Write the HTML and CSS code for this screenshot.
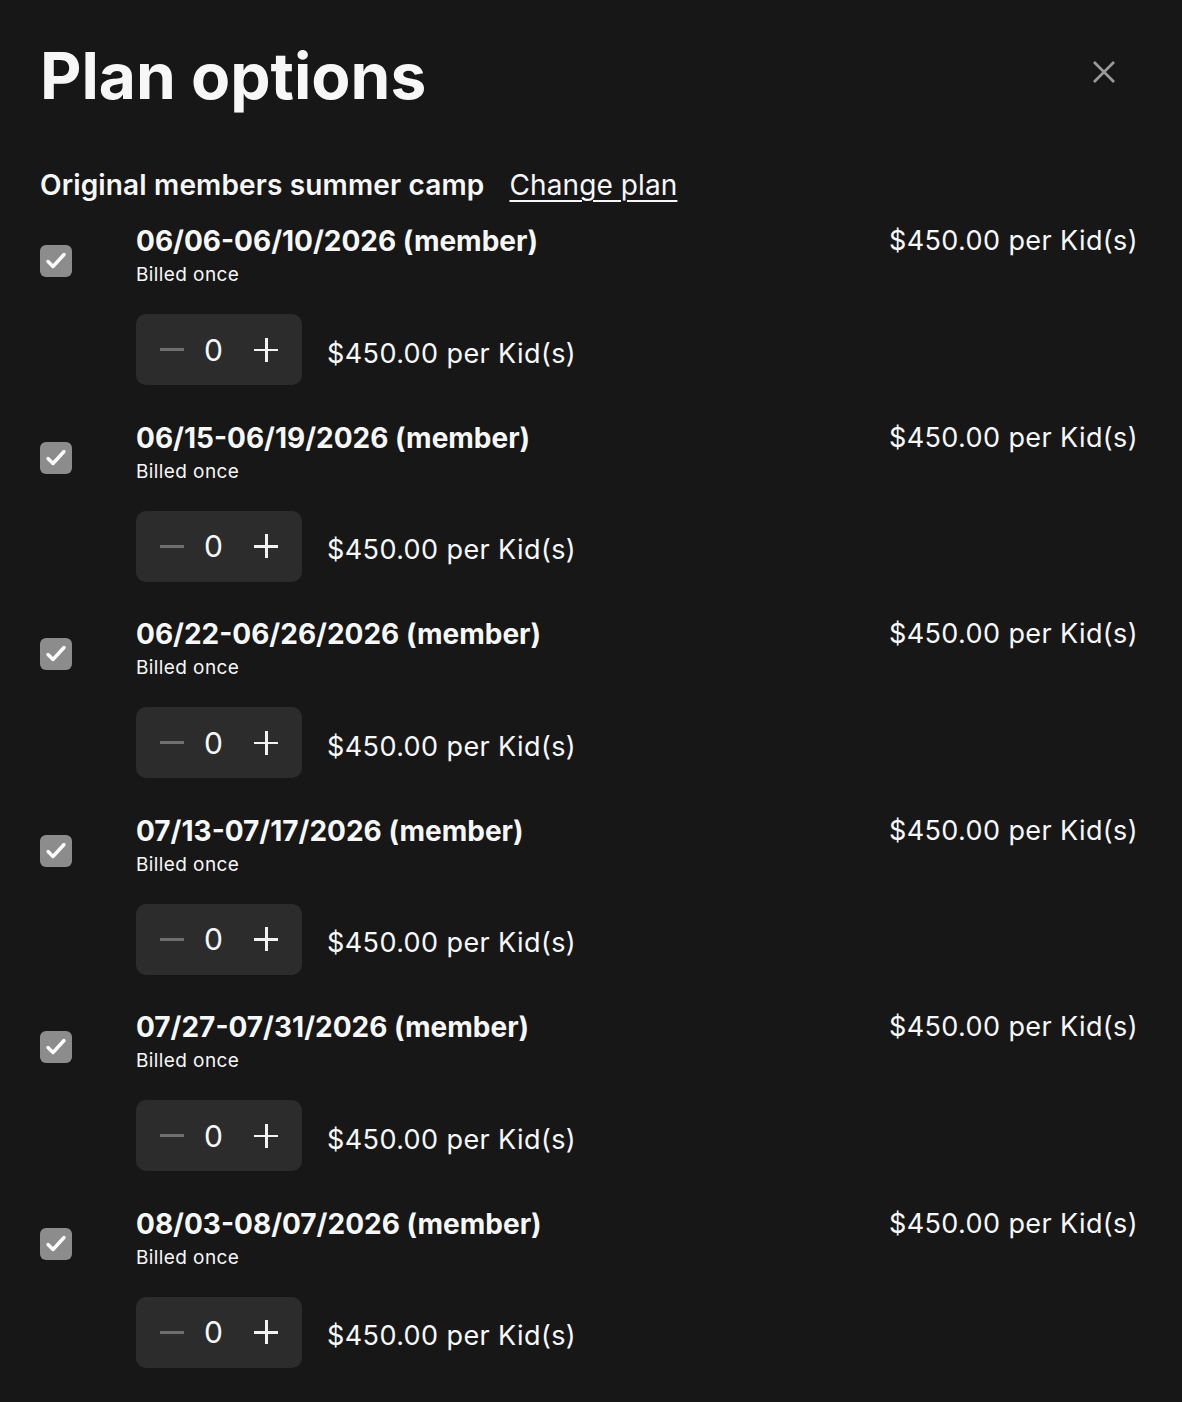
FILE: index.html
```html
<!DOCTYPE html>
<html lang="en">
<head>
<meta charset="utf-8">
<title>Plan options</title>
<link rel="stylesheet" href="styles.css">
</head>
<body>
<div class="modal">
  <header class="modal-header">
    <h1 class="title">Plan options</h1>
    <button class="close" aria-label="Close">
      <svg width="24" height="24" viewBox="0 0 24 24"><path d="M2 2 L22 22 M22 2 L2 22" stroke="#9b9b9b" stroke-width="2.6" fill="none"/></svg>
    </button>
  </header>
  <div class="plan-head">
    <span class="plan-name">Original members summer camp</span>
    <a class="change" href="#">Change plan</a>
  </div>
  <ul class="options">
    <li class="option">
      <span class="check"><svg width="32" height="32" viewBox="0 0 32 32"><path d="M8 16.5 L13 21.5 L24 9.5" stroke="#fff" stroke-width="3.4" fill="none" stroke-linecap="round" stroke-linejoin="round"/></svg></span>
      <div class="info"><div class="name">06/06-06/10/2026 (member)</div><div class="billed">Billed once</div></div>
      <div class="price">$450.00 per Kid(s)</div>
      <div class="qty-row">
        <div class="stepper"><span class="minus"></span><span class="count">0</span><span class="plus"></span></div>
        <span class="qty-price">$450.00 per Kid(s)</span>
      </div>
    </li>
    <li class="option">
      <span class="check"><svg width="32" height="32" viewBox="0 0 32 32"><path d="M8 16.5 L13 21.5 L24 9.5" stroke="#fff" stroke-width="3.4" fill="none" stroke-linecap="round" stroke-linejoin="round"/></svg></span>
      <div class="info"><div class="name">06/15-06/19/2026 (member)</div><div class="billed">Billed once</div></div>
      <div class="price">$450.00 per Kid(s)</div>
      <div class="qty-row">
        <div class="stepper"><span class="minus"></span><span class="count">0</span><span class="plus"></span></div>
        <span class="qty-price">$450.00 per Kid(s)</span>
      </div>
    </li>
    <li class="option">
      <span class="check"><svg width="32" height="32" viewBox="0 0 32 32"><path d="M8 16.5 L13 21.5 L24 9.5" stroke="#fff" stroke-width="3.4" fill="none" stroke-linecap="round" stroke-linejoin="round"/></svg></span>
      <div class="info"><div class="name">06/22-06/26/2026 (member)</div><div class="billed">Billed once</div></div>
      <div class="price">$450.00 per Kid(s)</div>
      <div class="qty-row">
        <div class="stepper"><span class="minus"></span><span class="count">0</span><span class="plus"></span></div>
        <span class="qty-price">$450.00 per Kid(s)</span>
      </div>
    </li>
    <li class="option">
      <span class="check"><svg width="32" height="32" viewBox="0 0 32 32"><path d="M8 16.5 L13 21.5 L24 9.5" stroke="#fff" stroke-width="3.4" fill="none" stroke-linecap="round" stroke-linejoin="round"/></svg></span>
      <div class="info"><div class="name">07/13-07/17/2026 (member)</div><div class="billed">Billed once</div></div>
      <div class="price">$450.00 per Kid(s)</div>
      <div class="qty-row">
        <div class="stepper"><span class="minus"></span><span class="count">0</span><span class="plus"></span></div>
        <span class="qty-price">$450.00 per Kid(s)</span>
      </div>
    </li>
    <li class="option">
      <span class="check"><svg width="32" height="32" viewBox="0 0 32 32"><path d="M8 16.5 L13 21.5 L24 9.5" stroke="#fff" stroke-width="3.4" fill="none" stroke-linecap="round" stroke-linejoin="round"/></svg></span>
      <div class="info"><div class="name">07/27-07/31/2026 (member)</div><div class="billed">Billed once</div></div>
      <div class="price">$450.00 per Kid(s)</div>
      <div class="qty-row">
        <div class="stepper"><span class="minus"></span><span class="count">0</span><span class="plus"></span></div>
        <span class="qty-price">$450.00 per Kid(s)</span>
      </div>
    </li>
    <li class="option">
      <span class="check"><svg width="32" height="32" viewBox="0 0 32 32"><path d="M8 16.5 L13 21.5 L24 9.5" stroke="#fff" stroke-width="3.4" fill="none" stroke-linecap="round" stroke-linejoin="round"/></svg></span>
      <div class="info"><div class="name">08/03-08/07/2026 (member)</div><div class="billed">Billed once</div></div>
      <div class="price">$450.00 per Kid(s)</div>
      <div class="qty-row">
        <div class="stepper"><span class="minus"></span><span class="count">0</span><span class="plus"></span></div>
        <span class="qty-price">$450.00 per Kid(s)</span>
      </div>
    </li>
  </ul>
</div>
</body>
</html>
```
FILE: styles.css
```css
* { box-sizing: border-box; }
html, body { margin: 0; padding: 0; }
body {
  background: #171717;
  color: #f7f7f7;
  font-family: Inter, "Noto Sans", sans-serif;
  width: 1182px;
  height: 1402px;
  overflow: hidden;
}
.modal { padding: 36px 44px 0 40px; }
.modal-header {
  display: flex;
  justify-content: space-between;
  align-items: flex-start;
}
.title {
  margin: 0;
  font-size: 64px;
  line-height: 80px;
  font-weight: 700;
  letter-spacing: 0;
}
.close {
  background: none;
  border: 0;
  padding: 0;
  margin: 24px 22px 0 0;
  width: 24px;
  height: 24px;
  display: block;
}
.close svg { display: block; }
.plan-head {
  margin-top: 53px;
  display: flex;
  align-items: baseline;
  gap: 25px;
  font-size: 28px;
  line-height: 32px;
}
.plan-name { font-weight: 600; letter-spacing: 0.15px; }
.change {
  color: #f7f7f7;
  text-decoration: underline;
  text-underline-offset: 5px;
  text-decoration-thickness: 2px;
  letter-spacing: 0.1px;
}
.options { list-style: none; margin: 4px 0 0; padding: 0; }
.option {
  display: grid;
  grid-template-columns: 96px 1fr auto;
  grid-template-rows: 68px 71px;
  row-gap: 22px;
  align-content: start;
  padding-top: 19px;
  height: 196.5px;
}
.check {
  grid-column: 1; grid-row: 1;
  align-self: center;
  margin-top: 6px;
  width: 32px; height: 32px;
  border-radius: 6px;
  background: #8c8c8c;
  display: flex; align-items: center; justify-content: center;
}
.check svg { display: block; }
.info { grid-column: 2; grid-row: 1; }
.name {
  font-size: 28px;
  line-height: 34px;
  font-weight: 700;
}
.billed {
  font-size: 19px;
  line-height: 34px;
  letter-spacing: 0.4px;
}
.price {
  grid-column: 3; grid-row: 1;
  font-size: 27px;
  line-height: 34px;
  letter-spacing: 0.4px;
}
.qty-row {
  grid-column: 2 / 4; grid-row: 2;
  display: flex;
  align-items: center;
  gap: 25px;
}
.stepper {
  width: 166px; height: 71px;
  border-radius: 10px;
  background: #2c2c2c;
  display: flex;
  align-items: center;
  padding: 0 24px;
}
.minus { width: 24px; height: 3px; background: #6f6f6f; }
.count { font-size: 30px; line-height: 34px; margin-left: 20px; width: 18px; text-align: center; }
.plus { position: relative; width: 24px; height: 24px; margin-left: auto; }
.plus::before, .plus::after {
  content: ""; position: absolute; background: #f2f2f2;
}
.plus::before { left: 0; top: 11px; width: 24px; height: 2.5px; }
.plus::after { left: 11px; top: 0; width: 2.5px; height: 24px; }
.qty-price {
  font-size: 27px;
  line-height: 34px;
  letter-spacing: 0.4px;
  margin-top: 8px;
}
```
